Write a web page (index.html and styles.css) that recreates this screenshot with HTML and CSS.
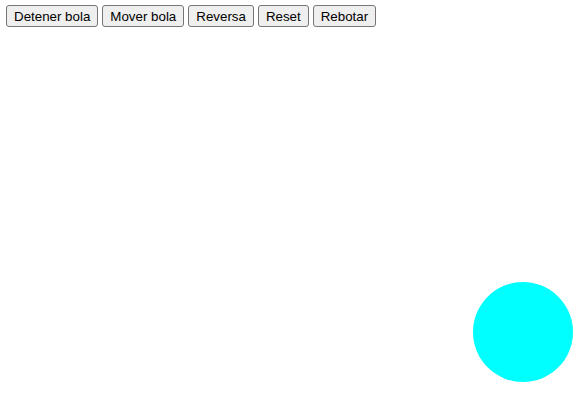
FILE: index.html
```html
<!DOCTYPE html>
<html>
<head>
<meta charset="utf-8">
<link rel="stylesheet" href="styles.css">
</head>
<body>
<div class="controls">
<button class="btn">Detener bola</button>
<button class="btn">Mover bola</button>
<button class="btn">Reversa</button>
<button class="btn">Reset</button>
<button class="btn">Rebotar</button>
</div>
<div class="ball"></div>
</body>
</html>
```
FILE: styles.css
```css
html, body {
  margin: 0;
  background: #fff;
}
body {
  padding: 5px 6px;
  font-family: "Liberation Sans", Arial, sans-serif;
}
.controls {
  display: flex;
  gap: 4px;
}
.btn {
  font-family: "Liberation Sans", Arial, sans-serif;
  font-size: 13.333px;
  height: 22px;
  padding: 1px 7px;
  color: #000;
  background: #efefef;
  border: 1px solid #767676;
  border-radius: 3px;
}
.ball {
  position: absolute;
  left: 473px;
  top: 282px;
  width: 100px;
  height: 100px;
  border-radius: 50%;
  background: #00ffff;
}
```
